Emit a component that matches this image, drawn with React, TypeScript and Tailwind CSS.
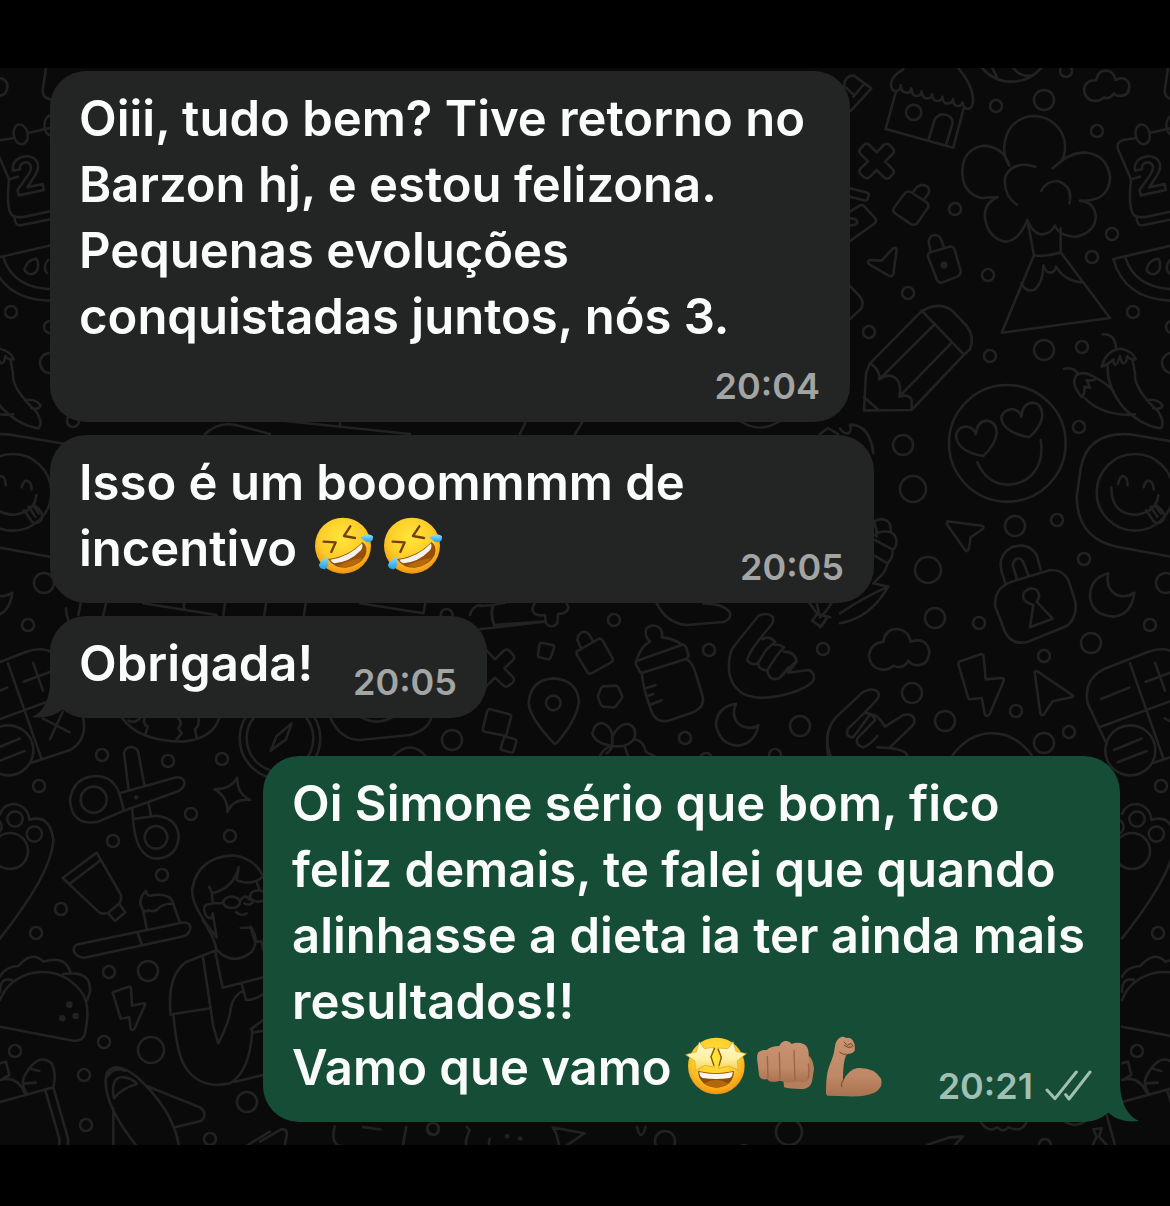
import type { ReactNode } from 'react';
import clsx from 'clsx';

type BubbleProps = {
  side: 'in' | 'out';
  time: string;
  tail?: boolean;
  className?: string;
  children: ReactNode;
};

type PatchProps = {
  x: number;
  y: number;
  scale?: number;
  children: ReactNode;
};

// Small rings scattered over the wallpaper: [cx, cy, r]
const rings: [number, number, number][] = [
  [996, 106, 6],
  [1044, 100, 10],
  [1066, 71, 6],
  [1097, 131, 6],
  [955, 209, 6],
  [1112, 234, 6],
  [1092, 257, 6],
  [988, 275, 6],
  [908, 293, 6],
  [1133, 312, 6],
  [869, 332, 6],
  [990, 356, 6],
  [1044, 350, 10],
  [1082, 347, 6],
  [1172, 327, 6],
  [1172, 363, 10],
  [903, 445, 10],
  [913, 489, 13],
  [1079, 427, 6],
  [1015, 526, 10],
  [1057, 520, 6],
  [928, 570, 13],
  [1084, 559, 6],
  [1166, 583, 10],
  [935, 618, 10],
  [979, 623, 6],
  [1150, 625, 6],
  [1091, 643, 10],
  [1044, 656, 6],
  [912, 693, 10],
  [945, 721, 10],
  [1016, 711, 6],
  [1069, 732, 6],
  [1044, 743, 10],
  [823, 649, 6],
  [614, 620, 6],
  [709, 650, 6],
  [685, 738, 6],
  [800, 726, 10],
  [775, 755, 6],
  [706, 759, 6],
  [452, 740, 10],
  [73, 421, 6],
  [102, 755, 6],
  [168, 761, 6],
  [222, 759, 6],
  [39, 786, 6],
  [191, 814, 6],
  [113, 841, 6],
  [230, 836, 6],
  [162, 875, 6],
  [61, 909, 6],
  [36, 933, 6],
  [109, 972, 6],
  [148, 971, 10],
  [104, 1042, 6],
  [151, 1050, 13],
  [15, 1051, 6],
  [84, 1075, 6],
  [86, 1125, 6],
  [247, 1102, 10],
  [210, 1139, 6],
  [433, 1129, 6],
  [665, 1141, 10],
  [744, 1151, 6],
  [789, 1132, 13],
  [1045, 1145, 6],
];

function Patch({ x, y, scale = 1 / 3, children }: PatchProps) {
  return (
    <g transform={`translate(${x} ${y}) scale(${scale})`} strokeWidth={2.6 / scale}>
      {children}
    </g>
  );
}

function DoodleTile() {
  return (
    <g id="doodles">
      {rings.map(([cx, cy, r]) => (
        <circle key={`${cx}-${cy}`} cx={cx} cy={cy} r={r} strokeWidth={2.6} />
      ))}

      {/* house, volcano, locks, calendar, melon */}
      <Patch x={840} y={60}>
        <path d="M12 78Q15 45 42 47L94 85L32 153M12 78L40 103M40 110L72 72" />
        <path d="M190 28Q150 50 153 78Q160 98 170 93Q182 90 182 75Q183 98 200 98Q213 98 214 85Q215 108 230 108Q244 108 245 94Q247 116 262 115Q276 115 276 102Q278 123 292 123Q305 124 307 110Q308 132 323 130Q338 130 339 118Q340 137 352 138Q366 138 367 127Q372 150 390 145Q402 138 398 105Q392 70 355 24" />
        <path d="M168 94L137 207L340 263L371 145M266 238L284 178Q300 155 325 167Q340 176 337 192L319 252" />
        <circle cx="221" cy="157" r="23" />
        <path d="M425 22Q460 65 515 65Q570 65 605 22M455 20L470 50M520 24Q540 52 575 47" />
        <path d="M760 122Q735 118 732 90Q735 60 768 61Q775 30 798 32Q820 32 827 60Q855 45 868 72Q870 105 845 107Q828 110 822 100Q808 120 792 112Q778 125 760 122Z" />
        <path d="M984 24L974 92Q974 115 1000 118" />
        <path d="M72 254Q80 247 88 255L110 277L131 255Q141 247 150 256L160 267Q165 275 158 282L135 304L160 330Q165 338 157 344L148 354Q140 359 132 352L110 330L88 352Q80 358 72 352L60 340Q55 332 62 325L84 304L60 280Q55 272 63 265Z" />
        <path d="M30 385L82 398Q88 400 86 408L82 418Q80 424 72 421L30 410M30 455L60 436Q68 433 73 439L106 475Q111 482 104 490L30 543M30 475Q52 475 52 487Q48 498 30 495" />
        <path d="M160 446L195 399Q202 392 212 396L258 426Q268 433 265 442L232 489Q225 498 214 493L168 462Q158 456 160 446ZM218 398L230 382Q245 368 262 380Q272 391 264 403L251 420" />
        <path d="M274 576L328 560Q338 558 343 566L362 632Q363 644 353 649L308 667Q296 670 291 660L264 590Q262 580 274 576ZM272 576L266 545Q268 525 287 525Q300 527 304 541L312 562" />
        <circle cx="312" cy="615" r="7" fill="currentColor" />
        <path d="M88 600L125 602L158 566Q170 560 170 570L160 642Q156 653 145 646L88 613Q79 606 88 600Z" />
        <path d="M508 316C488 290 490 250 500 225C515 185 550 168 585 168C630 170 672 205 675 255Q676 285 665 302L638 325M508 316Q490 260 430 257Q370 268 367 330Q365 400 425 414L473 411" />
        <path d="M473 411Q430 430 435 475Q445 535 495 545Q535 545 562 480Q575 515 600 523Q630 525 645 497Q660 530 710 530Q770 515 767 465Q760 425 720 422Q810 425 810 350Q800 285 740 278Q700 276 665 302" />
        <path d="M586 320Q520 300 496 350Q488 405 530 434M604 393Q620 360 655 364Q700 380 688 430" />
        <path d="M562 480L582 586L485 818L810 774L662 577L662 505M582 586Q620 592 662 577M544 670Q560 700 585 688Q610 665 610 616Q618 638 630 638Q645 637 648 620Q675 665 728 667" />
        <ellipse cx="908" cy="223" rx="21" ry="30" transform="rotate(-12 908 223)" />
        <path d="M885 235L850 240Q826 247 835 270L873 358Q864 440 880 463Q890 475 920 470L1110 430M890 475Q890 499 912 495L1110 455M932 218L1000 203M873 358L900 350" />
        <ellipse cx="1000" cy="196" rx="21" ry="30" />
        <text
          x="893"
          y="408"
          fontSize="150"
          fontWeight="700"
          fontFamily="Inter, sans-serif"
          transform="rotate(-12 893 408)"
        >
          2
        </text>
        <path d="M820 597L1110 530M820 597Q855 725 1010 722M855 590Q885 688 1010 688M920 625Q930 598 955 596Q965 610 957 632Q945 648 930 640Q918 634 920 625ZM990 600Q972 620 987 640" />
        <path d="M30 678L60 710Q75 730 62 748L30 777" />
      </Patch>

      {/* pencil, chillies, faces */}
      <Patch x={840} y={320}>
        <path d="M90 130L240 -22Q290 -58 335 -30L380 18Q405 50 390 88L372 104L215 270L72 271L78 160Z" />
        <path d="M90 130Q122 150 118 178Q150 155 172 180Q185 195 178 230Q205 220 215 240L215 270M118 178L285 12M178 230L335 68M245 -28L372 104M72 232L116 270" />
        <circle cx="502" cy="370" r="175" />
        <path d="M430 408Q350 395 348 345Q355 318 382 320Q402 323 407 343Q412 303 440 302Q470 305 470 340Q465 375 430 408ZM567 352Q485 335 484 290Q495 265 520 268Q540 272 544 290Q548 250 577 248Q607 250 607 290Q600 325 567 352ZM412 427Q440 492 502 494C570 492 615 440 602 360" />
        <path d="M788 43Q825 40 828 84M785 140Q800 88 845 86Q880 95 887 118Q870 120 862 108Q860 130 850 130Q842 125 840 108Q832 135 826 134Q820 132 820 118Q810 130 785 140M803 138Q800 200 850 262Q900 315 960 325Q978 315 955 275Q880 205 885 160L878 122M672 146Q700 140 715 162M726 232Q690 190 710 165Q730 150 770 175Q755 185 740 180L750 203L733 200Q735 220 726 232M735 235Q790 290 885 283M770 175Q800 190 822 215M920 240Q955 235 968 257Q960 272 940 264" />
        <path d="M1100 382L870 343Q745 335 723 440L710 530Q712 655 830 680L1100 730" />
        <circle cx="885" cy="517" r="115" />
        <path d="M834 492Q840 468 850 468Q862 470 863 496M911 502Q915 482 927 482Q940 485 941 508M814 503Q815 585 890 584Q950 575 955 526M918 570L942 605Q955 615 970 600Q978 585 965 570L945 552M932 560L952 590M945 555L962 580" />
        <path d="M322 604L425 617Q435 620 428 627L392 652L386 688Q382 698 375 690L320 612Z" />
        <path d="M0 325Q10 342 25 340Q35 335 30 314Q90 315 100 400" />
        <path d="M102 605Q125 590 145 605Q155 620 152 636Q175 650 168 675Q163 690 157 688Q162 710 143 730Q135 760 115 775L100 790M105 645Q120 630 152 636M105 660L157 688M105 708L143 730M110 650Q112 630 104 610M100 790L145 800Q90 895 0 910M145 800Q75 830 0 880" />
        <path d="M805 760Q750 775 750 830Q755 885 820 890Q875 885 883 818Q860 835 830 825Q795 805 805 760Z" />
      </Patch>

      {/* padlock, cloud, bolt, horns, calculator */}
      <Patch x={820} y={540}>
        <path d="M556 130L545 95Q532 45 575 22Q625 5 650 45L662 88M590 115L578 75Q582 53 600 56Q608 60 612 72L625 105" />
        <path d="M575 125L690 90Q730 88 745 120L766 185Q772 235 740 258L625 305Q575 318 555 275L526 200Q520 145 575 125Z" />
        <path d="M640 195L630 262L698 236L650 185Q665 168 650 150Q630 138 612 158Q600 182 640 195Z" />
        <path d="M188 389Q150 385 147 345Q152 310 190 305Q195 268 230 267Q265 270 272 305Q320 290 328 335Q325 380 285 375Q272 373 265 362Q250 390 220 377Q205 390 188 389Z" />
        <path d="M417 365L482 343Q490 342 491 350L497 418L545 414Q553 414 551 423L508 524Q500 532 495 524L485 474L452 478Q446 478 444 472L415 372Z" />
        <path d="M652 394L755 464Q764 468 755 472L698 484L672 523Q665 530 661 520L644 398Q645 391 652 394Z" />
        <path d="M32 648Q5 580 50 530L130 455Q165 440 176 460Q178 472 168 482L132 520M132 520L85 565Q72 590 100 592L145 530Q165 510 195 560L250 525Q280 518 284 542Q282 555 272 562L210 622M132 520Q155 515 165 540L112 595Q105 615 130 622Q150 615 172 588M172 622Q260 625 262 648" />
        <path d="M398 645Q450 578 520 580Q585 580 635 645" />
        <path d="M0 232Q20 215 35 188M0 262Q15 250 20 230M860 612L803 490Q790 420 850 388L985 335Q1060 310 1090 370L1155 530Q1170 600 1116 630L1001 668M930 370L1030 655M838 562L1130 455" />
        <path d="M843 477L928 443M977 425L1062 394M1005 368L1035 452M1034 535L1115 577M1094 515L1056 598M882 630L965 596M893 667L980 633" />
        <circle cx="931" cy="631" r="75" />
      </Patch>

      {/* bottle, pin, shaka hand, moon */}
      <Patch x={480} y={590}>
        <path d="M0 48L38 45Q30 80 42 105L190 95M0 118L190 95M38 45L75 38M165 38Q150 60 165 72Q178 78 195 75L198 100Q215 118 232 100L234 72Q262 72 266 52L258 38M0 160L45 208L70 183Q80 175 88 182L100 196Q106 204 98 211L73 235L98 260Q106 268 98 278L85 288Q77 293 70 286L45 263L18 290" />
        <path d="M183 158L218 165Q224 167 222 173L212 203Q209 209 203 208L178 202Q172 200 174 195L178 164ZM290 185L355 147Q362 144 367 150L398 205Q400 212 394 217L334 250Q326 253 322 246L290 194ZM303 175L292 150Q293 128 313 125Q328 128 332 142L341 155" />
        <path d="M222 460Q150 385 146 340Q150 268 222 265Q292 270 297 335Q290 390 232 457Q227 462 222 460Z" />
        <circle cx="220" cy="339" r="22" />
        <path d="M369 289L408 287Q413 288 415 293L426 316Q428 322 424 327L407 349Q403 353 398 352L370 350Q365 349 363 344L354 322Q353 317 356 312L364 293ZM28 357L88 373Q95 375 93 382L78 438L14 425Q7 422 9 415L22 362ZM78 440L105 448Q111 450 109 456L100 485Q97 489 90 487L65 480Q61 477 63 472L72 443Z" />
        <path d="M470 210Q482 170 510 155Q490 135 500 115Q520 98 540 115Q550 130 545 142Q580 145 605 163Q620 165 622 185Q630 202 618 207L485 249Q475 245 475 235Q462 220 470 210ZM470 213L605 165M485 249Q490 300 515 365Q530 400 565 392L640 367Q675 350 668 320L650 260Q640 220 620 207M500 294L527 285M505 317L520 312M511 344L545 331" />
        <path d="M380 490Q395 478 397 468Q345 460 337 430Q345 395 370 400Q395 410 397 440Q415 400 445 402Q470 410 465 440Q450 475 397 468M397 440L397 468M435 472L445 500M465 448Q492 455 497 485L525 500M360 498Q370 475 390 470" />
        <path d="M530 40Q560 100 620 105L730 96Q755 88 750 68Q735 42 670 40" />
        <path d="M748 250Q742 190 765 165L835 78Q860 65 878 80Q882 90 876 102L840 146Q802 195 802 212Q820 230 835 218L858 180Q880 160 885 155Q865 135 848 148M835 218Q832 238 862 242Q885 200 912 172Q895 160 885 165M862 242Q868 275 898 265L925 232M912 185Q945 185 950 215L925 248L985 240Q1008 248 1000 272Q985 292 930 310Q770 355 748 250M898 265L950 212" />
        <path d="M768 341Q710 350 708 405Q720 465 775 467Q825 460 835 406Q815 420 785 408Q750 385 768 341Z" />
        <path d="M988 38L1012 72L1050 82M1010 38L1018 74M1012 72L996 92L1022 110L1040 85M1050 410Q1035 440 1045 500" />
      </Patch>

      {/* scissors, tube, paw, granny */}
      <Patch x={0} y={700}>
        <path d="M372 332L295 365Q215 380 210 300Q220 230 290 228Q340 230 358 280ZM358 280L530 232Q555 232 553 252Q550 268 530 275L372 332M386 270L372 160Q375 142 393 141Q412 142 415 158L433 255M396 325L400 357L470 347Q535 355 536 412Q530 472 470 476Q405 475 398 345M445 308L453 347" />
        <circle cx="281" cy="299" r="39" />
        <circle cx="468" cy="412" r="34" />
        <circle cx="409" cy="292" r="3" />
        <path d="M188 534L290 458L363 585Q365 598 360 608L325 638Q308 645 295 635ZM208 552L303 480M325 640L345 663L376 637L358 612" />
        <path d="M643 268Q690 270 712 233Q710 280 750 300Q700 295 682 336Q685 290 643 268Z" />
        <path d="M365 52Q415 125 550 125Q640 115 658 52M385 62Q410 75 430 40M435 52Q425 70 443 80L437 100M533 52Q550 70 535 85L545 100L530 118M595 52Q600 75 585 88L590 115" />
        <path d="M0 342Q10 312 45 312Q85 320 88 360Q150 340 160 420Q155 520 0 715" />
        <circle cx="45" cy="357" r="23" />
        <circle cx="103" cy="402" r="23" />
        <circle cx="30" cy="453" r="54" />
        <circle cx="-18" cy="380" r="23" />
        <path d="M650 712Q570 615 577 565Q595 470 700 466Q765 475 790 530M628 560L636 580Q700 565 716 502L710 540Q750 560 790 530M770 545L778 570M636 580L638 608Q665 612 670 607M722 600Q735 580 750 600M635 612Q605 610 615 640Q620 655 635 655L638 640L650 712M708 636Q722 650 740 640M722 684L752 682L763 720M733 610Q755 620 760 600" />
        <ellipse cx="695" cy="607" rx="25" ry="17" />
        <ellipse cx="775" cy="588" rx="25" ry="17" />
        <path d="M428 628Q410 600 438 573Q440 592 460 585Q515 580 520 612Q490 608 470 630Q455 637 445 630Q438 640 428 628ZM430 635L441 690M520 612L540 668" />
        <circle cx="840" cy="115" r="121" />
        <circle cx="840" cy="115" r="100" />
        <circle cx="900" cy="40" r="8" />
        <path d="M812 152L830 108L875 70L858 118Z" />
      </Patch>

      {/* taco, plane, mouse, basket */}
      <Patch x={0} y={920}>
        <path d="M235 73L545 8Q572 5 571 25Q568 45 545 50L260 112Q235 118 222 95Q218 78 235 73ZM413 40L425 72" />
        <path d="M0 320L220 362Q248 365 255 340Q275 250 240 210Q185 145 100 158Q25 175 0 240M35 180Q0 170 0 215M0 170Q15 140 55 138Q95 90 130 125Q195 105 211 156M190 162Q275 150 270 215L262 240" />
        <g fill="currentColor">
          <circle cx="208" cy="254" r="6" />
          <circle cx="187" cy="295" r="6" />
          <circle cx="227" cy="288" r="6" />
        </g>
        <path d="M338 217L386 200Q392 199 393 206L396 257L430 250Q438 250 434 257L404 325Q397 336 392 326L388 292L362 296Z" />
        <path d="M0 546L160 502M160 502L204 655V678M136 512L178 655V678M80 520Q60 490 75 465Q115 395 155 430Q170 460 160 502M75 490L107 488M95 447L118 453M0 430L18 425L28 465L10 475M0 480Q50 465 75 520" />
        <path d="M410 678Q300 540 320 460Q345 420 410 470Q520 570 537 678M342 535Q330 470 370 472Q400 475 410 492Q365 505 342 535ZM322 470Q340 440 375 452M340 565V678M440 498L600 562Q625 580 605 602L525 622M738 678L810 635" />
        <path d="M512 285Q500 165 560 125L645 92M520 282L632 265M520 282Q530 400 555 440Q600 510 690 490Q750 455 757 330M608 106L640 320L655 370Q690 300 692 265Q700 225 730 212M645 92L668 203L790 172M725 190L738 240Q765 240 790 222M705 485L790 465M752 328L790 300M757 338L790 332M608 0Q640 45 650 90Q700 140 755 95Q780 60 752 20M765 65H785L790 90" />
      </Patch>

      {/* fragments that peek out between the bubbles */}
      <Patch x={20} y={600}>
        <path d="M138 25Q138 45 145 60M175 45L182 10M250 45L258 10M370 10L590 45M492 26V10M610 45L615 10M733 45L738 10M852 45L857 10M1020 10L1210 40L1216 10M1350 45Q1355 20 1380 15M1420 15Q1410 45 1425 80" />
        <circle cx="1280" cy="45" r="18" />
        <path d="M930 350Q960 420 1020 420L1170 405Q1225 390 1235 350M1020 350Q1070 380 1120 350" />
      </Patch>
      <path
        strokeWidth={2.6}
        d="M205 434Q220 420 240 426L270 434M285 421L410 434M340 421V427M520 434L526 421M575 434L583 421M820 434L828 428L838 434M740 421Q760 434 780 421M392 757Q412 738 426 757"
      />

      <Patch x={260} y={1090} scale={0.3827}>
        <path d="M0 135L55 103Q72 100 70 118L60 165M195 95Q185 135 205 145L228 148L222 165M270 97L315 103M382 96L370 165M255 165L275 157L310 165M437 96Q440 117 455 117Q467 115 467 96M540 96L548 105Q530 140 545 165M600 128Q595 150 602 165M722 152L715 165M765 98L848 113L782 158Q780 120 765 98M985 96Q995 140 1008 96M512 165L535 152" />
        <circle cx="646" cy="121" r="3" />
        <circle cx="680" cy="127" r="3" />
      </Patch>
      <Patch x={900} y={1040}>
        <path d="M242 245Q265 280 292 262Q310 280 325 262Q365 280 380 245M80 315L150 292L188 290L165 315M495 245Q525 265 553 245M580 268L605 265L597 290L620 315M580 268L590 290L578 315M620 225L645 315" />
      </Patch>
    </g>
  );
}

function Wallpaper() {
  return (
    <svg
      className="absolute inset-0 h-full w-full text-[#222222]"
      viewBox="0 68 1170 1077"
      preserveAspectRatio="xMidYMid slice"
      fill="none"
      stroke="currentColor"
      strokeLinecap="round"
      strokeLinejoin="round"
      aria-hidden="true"
    >
      <DoodleTile />
      <use href="#doodles" x="-1122" />
      <use href="#doodles" x="1122" />
    </svg>
  );
}

function Rofl() {
  return (
    <svg className="h-[59px] w-[60px] shrink-0" viewBox="39 39 180 177" role="img" aria-label="rofl">
      <defs>
        <radialGradient id="faceGold" cx="0.48" cy="0.35" r="0.68">
          <stop offset="0" stopColor="#ffe63b" />
          <stop offset="0.6" stopColor="#fdcb27" />
          <stop offset="0.86" stopColor="#f6a41b" />
          <stop offset="1" stopColor="#e98a10" />
        </radialGradient>
        <linearGradient id="tear" x1="0" y1="0" x2="0" y2="1">
          <stop offset="0" stopColor="#8be0fb" />
          <stop offset="1" stopColor="#229fe0" />
        </linearGradient>
      </defs>
      <circle cx="126" cy="128" r="84" fill="url(#faceGold)" />
      <path d="M81 168Q145 160 184 117Q202 128 194 156Q178 188 135 194Q98 195 81 168Z" fill="#955005" />
      <path d="M88 170Q145 162 183 121Q187 132 180 142Q145 178 100 181Q92 178 88 170Z" fill="#f4f1ee" />
      <path d="M112 188Q140 172 185 165Q165 192 132 193Z" fill="#b7680d" />
      <path
        d="M68 116L104 118L91 147M148 70L129 99L162 105"
        fill="none"
        stroke="#754008"
        strokeWidth="7"
        strokeLinecap="round"
        strokeLinejoin="round"
      />
      <path d="M178 103Q204 88 216 100Q217 116 204 118Q192 118 178 103Z" fill="url(#tear)" />
      <path d="M80 161Q86 190 73 198Q58 201 54 187Q55 174 80 161Z" fill="url(#tear)" />
    </svg>
  );
}

function StarStruck() {
  return (
    <svg className="h-[60px] w-[62px] shrink-0" viewBox="45 45 186 180" role="img" aria-label="star-struck">
      <defs>
        <linearGradient id="star" x1="0" y1="0" x2="0" y2="1">
          <stop offset="0" stopColor="#fff9c9" />
          <stop offset="0.6" stopColor="#fdf0a0" />
          <stop offset="1" stopColor="#f5cf50" />
        </linearGradient>
      </defs>
      <circle cx="139" cy="138" r="85" fill="url(#faceGold)" />
      <path
        d="M88 66L103 86L133 82L122 111L134 142L104 136L76 153L75 123L47 104L79 95Z"
        fill="url(#star)"
        stroke="#d9a02c"
        strokeWidth="2"
        strokeLinejoin="round"
      />
      <path
        d="M189 65L198 94L229 101L202 122L205 151L176 138L145 146L154 113L143 84L174 86Z"
        fill="url(#star)"
        stroke="#d9a02c"
        strokeWidth="2"
        strokeLinejoin="round"
      />
      <path d="M134 84L123 110L132 137M144 86L154 112L147 137" fill="none" stroke="#8e5008" strokeWidth="4" />
      <path d="M84 153Q137 166 192 153Q190 201 138 203Q87 198 84 153Z" fill="#8e4b05" />
      <path d="M88 156Q138 168 188 156Q188 171 179 174Q138 180 98 174Q88 169 88 156Z" fill="#fbf8f4" />
      <path d="M102 190Q138 170 174 190Q158 204 134 202Q114 201 102 190Z" fill="#b5680b" />
    </svg>
  );
}

function Fist() {
  return (
    <svg className="mt-1 h-[52px] w-[60px] shrink-0" viewBox="258 60 180 156" role="img" aria-label="fist">
      <defs>
        <linearGradient id="skin" x1="0" y1="0" x2="0" y2="1">
          <stop offset="0" stopColor="#c99370" />
          <stop offset="0.65" stopColor="#bf8866" />
          <stop offset="1" stopColor="#a8724f" />
        </linearGradient>
      </defs>
      <path
        d="M340 180L342 205Q365 211 400 210Q420 207 426 188L432 150Q430 122 417 110L400 165Z"
        fill="#b47f5c"
      />
      <path
        d="M265 100Q274 91 291 93Q300 82 328 81Q335 65 350 66Q360 68 365 75Q382 67 401 75Q414 80 416 102L419 172Q418 190 397 190Q388 190 378 187Q365 194 342 188L328 185Q310 192 296 185L292 180Q270 185 267 168L262 125Q260 108 265 100Z"
        fill="url(#skin)"
      />
      <path
        d="M292 112L294 177M328 101L330 180M372 94L375 184M415 135Q419 163 414 178"
        fill="none"
        stroke="#98664a"
        strokeWidth="4"
        strokeLinecap="round"
      />
    </svg>
  );
}

function Biceps() {
  return (
    <svg className="h-[62px] w-[58px] shrink-0" viewBox="471 45 174 186" role="img" aria-label="biceps">
      <path
        d="M474 221Q473 168 484 137Q498 106 500 85Q502 58 520 51Q528 49 534 54Q548 50 554 61Q563 74 560 92Q554 101 542 101L534 106Q524 132 525 183Q540 150 568 144Q618 141 639 176Q647 203 618 219Q582 232 540 229L478 227Z"
        fill="url(#skin)"
      />
      <path d="M525 182Q518 192 521 200" fill="none" stroke="#895739" strokeWidth="4" strokeLinecap="round" />
      <path
        d="M528 66L538 76L549 70L555 79M529 76L540 82L551 81M515 97Q525 106 537 103"
        fill="none"
        stroke="#74472f"
        strokeWidth="3"
        strokeLinecap="round"
      />
    </svg>
  );
}

function ReadTicks() {
  return (
    <svg className="h-[34px] w-[48px] shrink-0" viewBox="435 86 144 102" fill="none" aria-label="delivered">
      <path
        d="M441 149L465 175L529 95M497 163L507 176L570 95"
        stroke="currentColor"
        strokeWidth="9"
        strokeLinecap="round"
        strokeLinejoin="round"
      />
    </svg>
  );
}

function Tail({ side }: { side: 'in' | 'out' }) {
  if (side === 'in') {
    return (
      <svg className="absolute bottom-0 -left-[18px] h-[37px] w-[50px]" viewBox="35 240 150 111" aria-hidden="true">
        <path d="M90 240Q86 325 35 348Q90 356 127 325L185 345V240Z" fill="#232525" />
      </svg>
    );
  }
  return (
    <svg className="absolute -right-[19px] bottom-0 h-[37px] w-[49px]" viewBox="570 135 147 111" aria-hidden="true">
      <path d="M660 135Q665 220 717 243Q660 250 625 218L570 240V135Z" fill="#154d37" />
    </svg>
  );
}

function Bubble({ side, time, tail, className, children }: BubbleProps) {
  return (
    <article
      className={clsx(
        'relative max-w-full rounded-[36px] px-[29px] pt-[15px] pb-[21px]',
        side === 'in' ? 'self-start bg-[#232525]' : 'self-end bg-[#154d37]',
        className
      )}
    >
      {tail && <Tail side={side} />}
      <div className="relative text-[49px] leading-[66px] font-semibold text-[#fafcfb]">{children}</div>
      <div
        className={clsx(
          'absolute bottom-[13px] flex items-center gap-3 text-[36px] leading-[46px] font-semibold',
          side === 'in' ? 'right-[30px] text-[#a3a5a4]' : 'right-[27px] text-[#a1bfb2]'
        )}
      >
        <time>{time}</time>
        {side === 'out' && <ReadTicks />}
      </div>
    </article>
  );
}

export default function App() {
  return (
    <main className="min-h-screen bg-black pt-[68px] pb-[61px] font-['Inter',sans-serif]">
      <section className="relative overflow-hidden bg-[#0a0a0a]">
        <Wallpaper />
        <div className="relative flex flex-col gap-[13px] px-[50px] pt-[3px] pb-[23px]">
          <Bubble side="in" time="20:04" className="w-[800px]">
            <p className="pb-[51px]">
              Oiii, tudo bem? Tive retorno no
              <br />
              Barzon hj, e estou felizona.
              <br />
              Pequenas evoluções
              <br />
              conquistadas juntos, nós 3.
            </p>
          </Bubble>

          <Bubble side="in" time="20:05" className="w-[824px]">
            <p>Isso é um booommmm de</p>
            <p className="flex items-start gap-[9px]">
              <span className="mr-2">incentivo</span>
              <Rofl />
              <Rofl />
            </p>
          </Bubble>

          <Bubble side="in" time="20:05" tail className="w-[437px]">
            <p>Obrigada!</p>
          </Bubble>

          <Bubble side="out" time="20:21" tail className="mt-[25px] w-[857px]">
            <p>
              Oi Simone sério que bom, fico
              <br />
              feliz demais, te falei que quando
              <br />
              alinhasse a dieta ia ter ainda mais
              <br />
              resultados!!
            </p>
            <p className="flex items-start gap-[9px]">
              <span className="mr-1">Vamo que vamo</span>
              <StarStruck />
              <Fist />
              <Biceps />
            </p>
          </Bubble>
        </div>
      </section>
    </main>
  );
}
